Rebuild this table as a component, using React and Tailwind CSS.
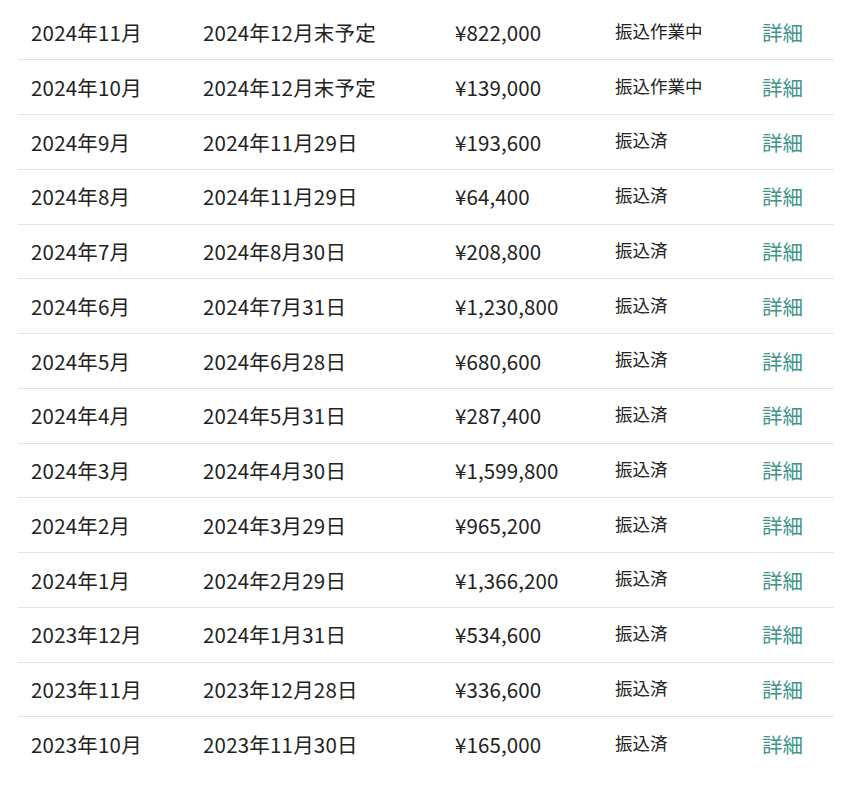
const rows = [
  ["2024年11月", "2024年12月末予定", "¥822,000", "振込作業中"],
  ["2024年10月", "2024年12月末予定", "¥139,000", "振込作業中"],
  ["2024年9月", "2024年11月29日", "¥193,600", "振込済"],
  ["2024年8月", "2024年11月29日", "¥64,400", "振込済"],
  ["2024年7月", "2024年8月30日", "¥208,800", "振込済"],
  ["2024年6月", "2024年7月31日", "¥1,230,800", "振込済"],
  ["2024年5月", "2024年6月28日", "¥680,600", "振込済"],
  ["2024年4月", "2024年5月31日", "¥287,400", "振込済"],
  ["2024年3月", "2024年4月30日", "¥1,599,800", "振込済"],
  ["2024年2月", "2024年3月29日", "¥965,200", "振込済"],
  ["2024年1月", "2024年2月29日", "¥1,366,200", "振込済"],
  ["2023年12月", "2024年1月31日", "¥534,600", "振込済"],
  ["2023年11月", "2023年12月28日", "¥336,600", "振込済"],
  ["2023年10月", "2023年11月30日", "¥165,000", "振込済"],
];

export default function App() {
  return (
    <div className="min-h-screen bg-white font-['Noto_Sans_CJK_JP',sans-serif] text-[#222]">
      <div className="mx-[18px] w-[816px] pt-[5.5px]">
        {rows.map(([month, payDate, amount, status], i) => (
          <div
            key={month}
            className={`grid h-[54.77px] grid-cols-[172px_252px_160px_147px_1fr] items-center pl-[13px] ${
              i < rows.length - 1 ? "border-b border-[#e6e6e6]" : ""
            }`}
          >
            <span className="text-[20.5px] tracking-[0.2px]">{month}</span>
            <span className="text-[20.5px] tracking-[0.2px]">{payDate}</span>
            <span className="text-[20.5px] tracking-[0.1px]">{amount}</span>
            <span className="-mt-[3px] text-[17.5px]">{status}</span>
            <a href="#" className="text-[20.5px] text-[#40958a]">
              詳細
            </a>
          </div>
        ))}
      </div>
    </div>
  );
}
